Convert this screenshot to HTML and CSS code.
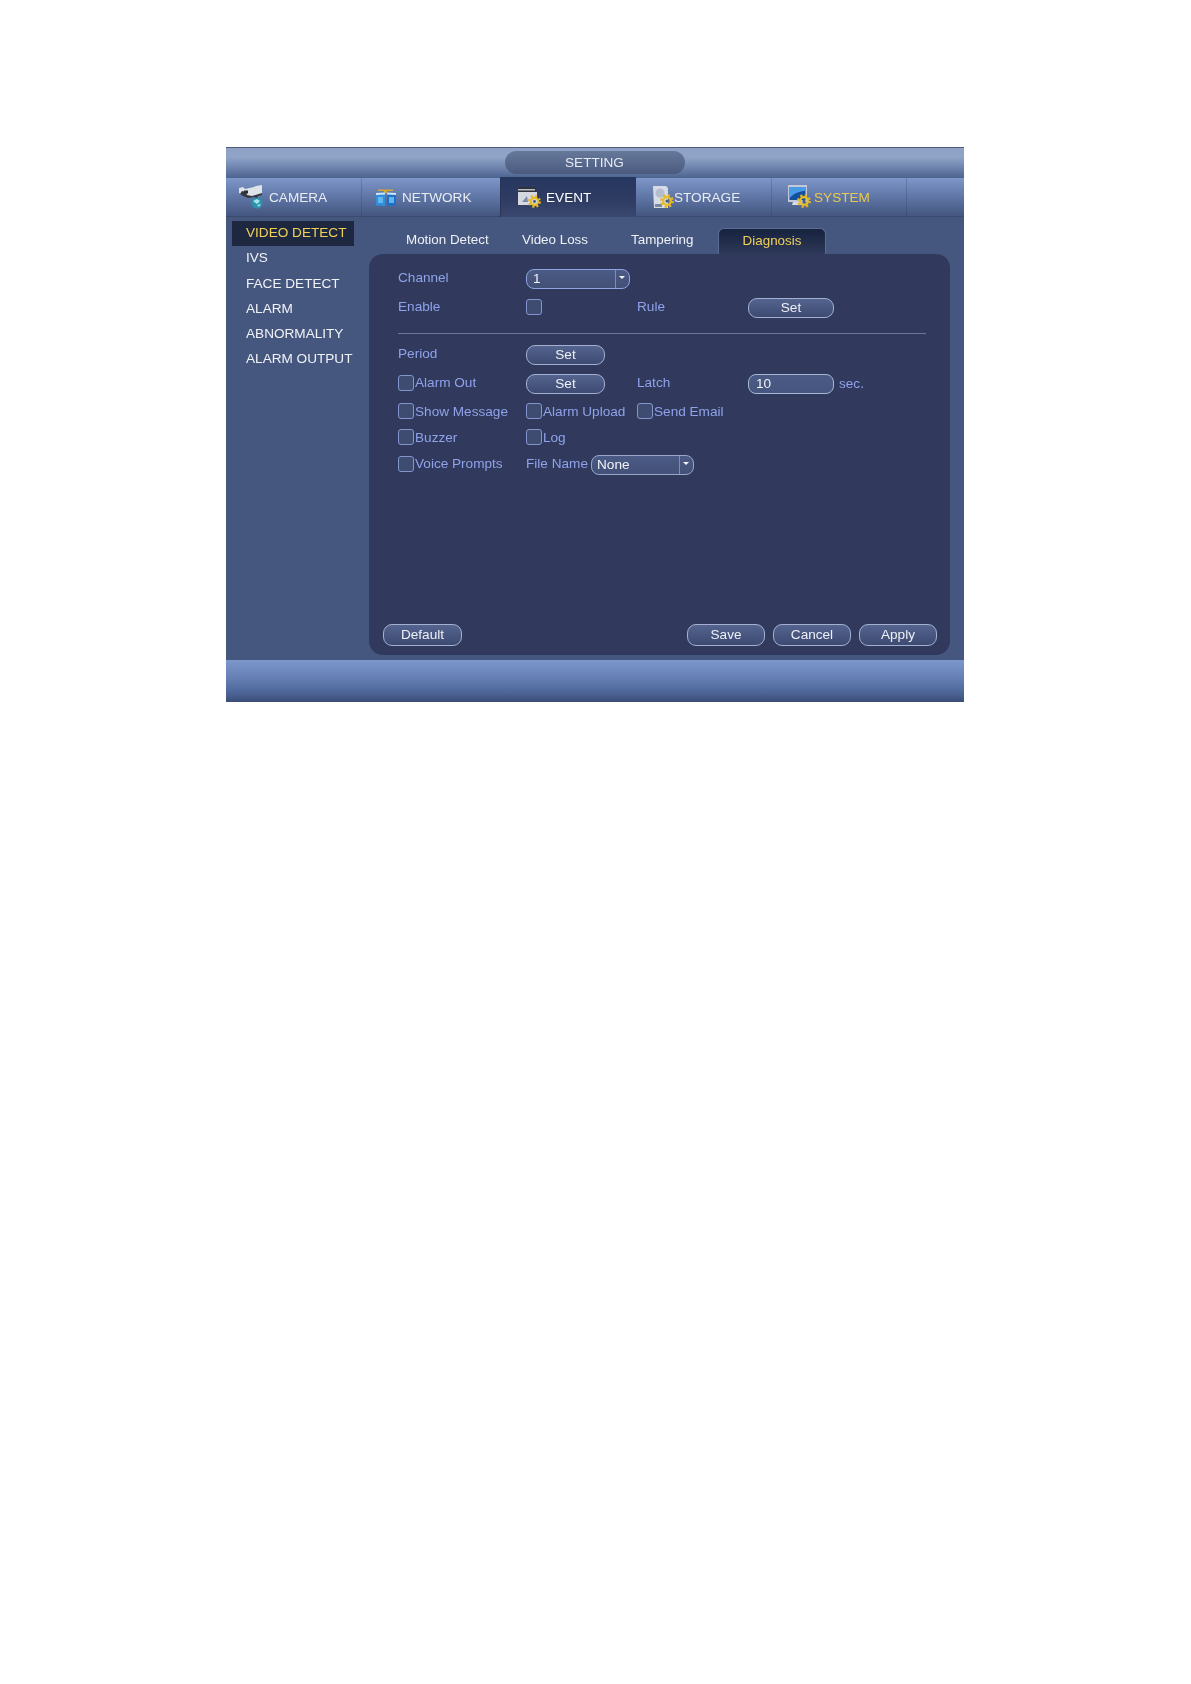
FILE: index.html
```html
<!DOCTYPE html>
<html lang="en">
<head>
    <meta charset="UTF-8">
    <meta name="viewport" content="width=device-width, initial-scale=1.0">
    <title>Setting</title>
    <link rel="stylesheet" href="styles.css">
</head>
<body>
    <svg class="defs" width="0" height="0">
        <symbol id="gear" viewBox="0 0 16 16">
            <circle cx="8" cy="8" r="6.6" fill="none" stroke="#e2b521" stroke-width="2.6" stroke-dasharray="2.6 2.58"/>
            <circle cx="8" cy="8" r="4.4" fill="none" stroke="#e8bd26" stroke-width="2.6"/>
            <circle cx="8" cy="8" r="1.8" fill="#4a5a80"/>
        </symbol>
    </svg>

    <div class="window">
        <div class="titlebar">
            <div class="title-pill">SETTING</div>
        </div>

        <div class="tabs">
            <div class="tab tab-camera">
                <svg class="icon" width="26" height="24" viewBox="0 0 26 24">
                    <path d="M0 3l4-1 2 2 9-2 2-1 6-1v9l-6 2-6 1-5-1-6-3z" fill="#dfe2e8"/>
                    <path d="M3 6l4 1 1 3 5 1 10-3v2l-7 2-7 1-5-2-3-2z" fill="#343841"/>
                    <path d="M5 5.500h4v3H5z" fill="#2a2d34"/>
                    <path d="M17 11l1 3" stroke="#2c3038" stroke-width="2"/>
                    <circle cx="18" cy="18" r="5.600" fill="#2b93ad"/>
                    <path d="M14 16l4-2 3 2-3 3zM18 20l4-1-2 3z" fill="#a9e3ea"/>
                </svg>
                <span>CAMERA</span>
            </div>
            <div class="tab tab-network">
                <svg class="icon" width="22" height="20" viewBox="0 0 22 20">
                    <path d="M3 2.500h15v1.500h-6v2h-3v-2H3z" fill="#d9a92f"/>
                    <path d="M1 6l9-.5v13.500l-9-.5z" fill="#2f8fdc"/>
                    <path d="M12 5.500l9 .5v12.500l-9 .5z" fill="#1d70c6"/>
                    <path d="M1 6l9-.5v2l-9 .5zM12 5.500l9 .5v2l-9-.5z" fill="#cfe4f4"/>
                    <path d="M3 10h5v6H3zM14 10h5v6h-5z" fill="#62b6ee"/>
                </svg>
                <span>NETWORK</span>
            </div>
            <div class="tab tab-event">
                <svg class="icon" width="24" height="22" viewBox="0 0 24 22">
                    <path d="M1 1h17l2 5H1z" fill="#2f333b"/>
                    <path d="M1 3h17v1.500H1z" fill="#b9bdc4"/>
                    <path d="M1 6h19v13H1z" fill="#d5d8de"/>
                    <path d="M5 16l5-6 1 6z" fill="#7a8aa8"/>
                    <use href="#gear" x="11" y="9" width="13" height="13"/>
                </svg>
                <span>EVENT</span>
            </div>
            <div class="tab tab-storage">
                <svg class="icon" width="21" height="24" viewBox="0 0 21 24">
                    <path d="M0 1h13l2 2v20H1z" fill="#d6dbe6"/>
                    <circle cx="7" cy="8" r="4.500" fill="#b4bccd"/>
                    <path d="M2 19h7v3H2z" fill="#7d879c"/>
                    <use href="#gear" x="7" y="9" width="14" height="14"/>
                </svg>
                <span>STORAGE</span>
            </div>
            <div class="tab tab-system">
                <svg class="icon" width="24" height="24" viewBox="0 0 24 24">
                    <path d="M1 0h19v17H1z" fill="#c3c9d6"/>
                    <path d="M2.500 2h16v13h-16z" fill="#134f9e"/>
                    <path d="M2.500 2h16v4c-6 0-11 2-16 7z" fill="#4a9be6"/>
                    <path d="M6 17h9l2 3H5z" fill="#d7dbe4"/>
                    <use href="#gear" x="10" y="9" width="14" height="14"/>
                </svg>
                <span class="current">SYSTEM</span>
            </div>
        </div>

        <div class="content">
            <ul class="sidebar">
                <li class="active">VIDEO DETECT</li>
                <li>IVS</li>
                <li>FACE DETECT</li>
                <li>ALARM</li>
                <li>ABNORMALITY</li>
                <li>ALARM OUTPUT</li>
            </ul>

            <div class="main">
                <div class="subtabs">
                    <div class="subtab sub-motion">Motion Detect</div>
                    <div class="subtab sub-loss">Video Loss</div>
                    <div class="subtab sub-tamper">Tampering</div>
                    <div class="subtab sub-active">Diagnosis</div>
                </div>

                <div class="panel">
                    <div class="form">
                        <div class="row row-channel">
                            <label>Channel</label>
                            <div class="select select-channel"><span>1</span><i class="arrow"></i></div>
                        </div>
                        <div class="row row-enable">
                            <label>Enable</label>
                            <div class="cell"><span class="check"></span></div>
                            <label>Rule</label>
                            <button class="btn btn-wide">Set</button>
                        </div>
                        <div class="divider"></div>
                        <div class="row row-period">
                            <label>Period</label>
                            <button class="btn btn-set">Set</button>
                        </div>
                        <div class="row row-alarm">
                            <label class="opt"><span class="check"></span>Alarm Out</label>
                            <button class="btn btn-set">Set</button>
                            <label>Latch</label>
                            <div class="input">10</div>
                            <label class="unit">sec.</label>
                        </div>
                        <div class="row row-show">
                            <label class="opt"><span class="check"></span>Show Message</label>
                            <label class="opt"><span class="check"></span>Alarm Upload</label>
                            <label class="opt"><span class="check"></span>Send Email</label>
                        </div>
                        <div class="row row-buzzer">
                            <label class="opt"><span class="check"></span>Buzzer</label>
                            <label class="opt"><span class="check"></span>Log</label>
                        </div>
                        <div class="row row-voice">
                            <label class="opt"><span class="check"></span>Voice Prompts</label>
                            <div class="file">
                                <label>File Name</label>
                                <div class="select select-file"><span>None</span><i class="arrow"></i></div>
                            </div>
                        </div>
                    </div>

                    <div class="actions">
                        <button class="btn btn-default">Default</button>
                        <div class="actions-right">
                            <button class="btn btn-act">Save</button>
                            <button class="btn btn-act">Cancel</button>
                            <button class="btn btn-act">Apply</button>
                        </div>
                    </div>
                </div>
            </div>
        </div>

        <div class="footer"></div>
    </div>
</body>
</html>
```

FILE: styles.css
```css
* {
    box-sizing: border-box;
}

body {
    margin: 0;
    background-color: white;
    font-family: "Liberation Sans", Arial, sans-serif;
    font-size: 13.6px;
}

.defs {
    display: block;
    height: 0;
}

.window {
    width: 738px;
    height: 555px;
    margin: 147px 0 0 226px;
    display: flex;
    flex-direction: column;
    border-top: 1px solid #4d5b7c;
    background-color: #46577f;
    filter: blur(0.3px);
}

/* title */
.titlebar {
    height: 30px;
    flex: none;
    display: flex;
    justify-content: center;
    padding-top: 3px;
    padding-right: 1px;
    background: linear-gradient(#8fa2c4, #90a4c8 30%, #6f85ae 65%, #4d6390);
}

.title-pill {
    width: 180px;
    height: 23px;
    border-radius: 12px;
    background: linear-gradient(#66789a, #4b5b80);
    color: #e6e9ef;
    text-align: center;
    line-height: 23px;
}

/* main tabs */
.tabs {
    height: 39px;
    flex: none;
    display: flex;
    border-bottom: 1px solid #3b4a6d;
    background: linear-gradient(#7d97c8, #5f76a6 50%, #44567f);
}

.tab {
    height: 100%;
    display: flex;
    align-items: center;
    color: #e9ecf2;
    border-right: 1px solid rgba(40, 55, 90, 0.25);
}

.tab span {
    display: block;
}

.tab-camera {
    width: 136px;
    padding-left: 13px;
}

.tab-camera span {
    margin-left: 4px;
}

.tab-network {
    width: 138px;
    padding-left: 13px;
    border-right: none;
}

.tab-network span {
    margin-left: 5px;
}

.tab-event {
    width: 136px;
    padding-left: 16px;
    border-right: none;
    background: linear-gradient(#26375f, #2f3c64 60%, #3a4870);
    height: 40px;
    margin-top: -1px;
    border-left: 1px solid #2a3556;
    color: white;
}

.tab-event span {
    margin-left: 5px;
}

.tab-storage {
    width: 136px;
    padding-left: 17px;
}

.tab-system {
    width: 135px;
    padding-left: 15px;
}

.tab-system span {
    margin-left: 3px;
}

.current {
    color: #e9c94e;
}

/* left menu and right part */
.content {
    height: 443px;
    flex: none;
    display: flex;
}

.sidebar {
    width: 143px;
    flex: none;
    margin: 0;
    padding: 4px 0 0 6px;
    list-style: none;
    color: #f0f2f6;
}

.sidebar li {
    height: 25.3px;
    line-height: 24px;
    padding-left: 14px;
    white-space: nowrap;
}

.sidebar .active {
    width: 122px;
    background-color: #1d2740;
    color: #f1d155;
}

.main {
    width: 581px;
    flex: none;
    display: flex;
    flex-direction: column;
}

.subtabs {
    height: 37px;
    flex: none;
    display: flex;
    align-items: flex-end;
    color: #eef0f5;
    font-size: 13.4px;
}

.subtab {
    height: 26px;
    line-height: 24px;
    white-space: nowrap;
}

.sub-motion {
    margin-left: 37px;
    width: 116px;
}

.sub-loss {
    width: 109px;
}

.sub-tamper {
    width: 87px;
}

.sub-active {
    width: 108px;
    text-align: center;
    color: #efd05a;
    border: 1px solid #5a6c93;
    border-bottom: none;
    border-radius: 6px 6px 0 0;
    background: linear-gradient(#16223e, #2e3859);
}

.panel {
    height: 401px;
    flex: none;
    display: flex;
    flex-direction: column;
    justify-content: space-between;
    padding: 0 13px 9px 14px;
    border-radius: 14px;
    background-color: #313a5c;
    color: #8fa2ea;
}

/* form */
.form {
    padding: 15px 9px 0 15px;
}

.row {
    height: 20px;
    display: grid;
    grid-template-rows: 20px;
    grid-template-columns: 128px 111px 111px auto 1fr;
    align-items: center;
}

/* labels and check boxes sit a little above the controls */
.row label,
.cell {
    padding-bottom: 3px;
    white-space: nowrap;
}

.row-enable {
    margin-top: 9px;
}

.divider {
    height: 1px;
    margin-top: 15px;
    margin-right: 2px;
    background-color: #6a7698;
}

.row-period {
    margin-top: 11px;
}

.row-alarm {
    margin-top: 9px;
}

.row-show {
    margin-top: 8.5px;
}

.row-buzzer {
    margin-top: 6px;
}

.row-voice {
    margin-top: 6.5px;
}

.cell {
    display: flex;
}

.opt {
    display: flex;
    align-items: center;
}

.check {
    display: block;
    width: 16px;
    height: 16px;
    flex: none;
    margin-right: 1px;
    border: 1px solid #8295cc;
    border-radius: 3px;
    background-color: #3f4c72;
}

.select {
    height: 20px;
    display: flex;
    align-items: center;
    justify-content: space-between;
    border: 1px solid #8ea4e0;
    border-radius: 8px;
    background: linear-gradient(#4b5b85, #435078);
    color: #f2f4f8;
    padding-left: 6px;
}

.select span {
    padding-bottom: 1px;
}

.select-channel {
    width: 104px;
}

.file label {
    width: 65px;
}

.select-file {
    width: 103px;
    padding-left: 5px;
    border-color: #98a6c8;
}

.arrow {
    width: 14px;
    height: 100%;
    display: block;
    position: relative;
    border-left: 1px solid #7f8db0;
}

.arrow::after {
    content: "";
    position: absolute;
    left: 3px;
    top: 6px;
    border-left: 3.5px solid transparent;
    border-right: 3.5px solid transparent;
    border-top: 3.5px solid #f2f4f8;
}

.file {
    display: flex;
    align-items: center;
    grid-column: span 2;
}

.input {
    width: 86px;
    height: 20px;
    line-height: 17px;
    padding-left: 7px;
    border: 1px solid #aab6d4;
    border-radius: 8px;
    background: linear-gradient(#4a5a84, #475680);
    color: #f2f4f8;
}

.row .unit {
    margin-left: 5px;
    padding-bottom: 1px;
}

.btn {
    display: block;
    padding: 0 0 2px;
    border: 1px solid #a3b0d2;
    border-radius: 9px;
    background: linear-gradient(#54648e, #3d4a72);
    color: #eef0f5;
    font-family: inherit;
    font-size: 13.6px;
    cursor: pointer;
}

.btn-wide {
    width: 86px;
    height: 20px;
}

.btn-set {
    width: 79px;
    height: 20px;
}

.actions {
    display: flex;
    justify-content: space-between;
}

.actions-right {
    display: flex;
    gap: 8px;
}

.btn-default {
    width: 79px;
    height: 22px;
}

.btn-act {
    width: 78px;
    height: 22px;
}

.footer {
    height: 42px;
    flex: none;
    background: linear-gradient(#7c97ca, #6781b6 40%, #4f689b 75%, #3b4d76);
}
```
